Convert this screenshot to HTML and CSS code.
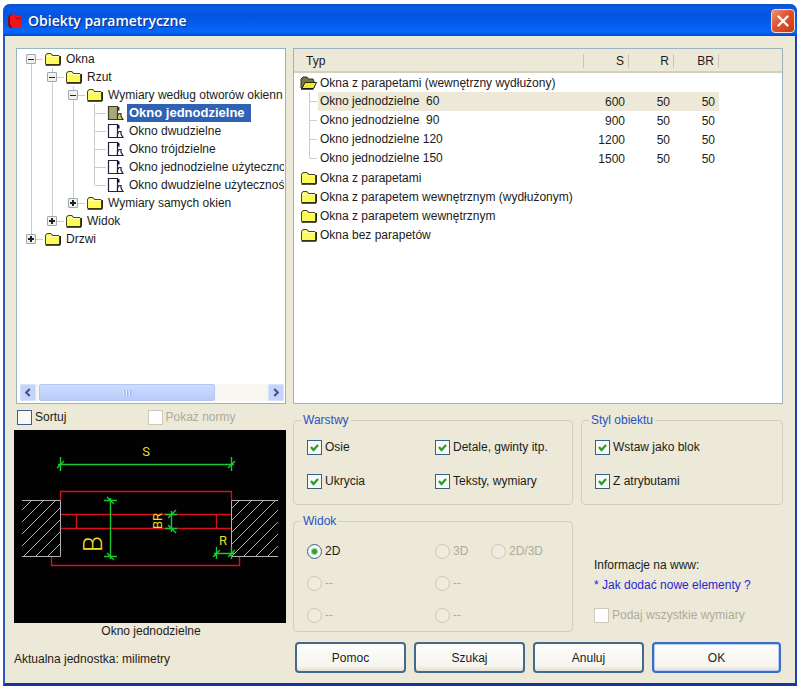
FILE: index.html
```html
<!DOCTYPE html>
<html lang="pl">
<head>
<meta charset="utf-8">
<title>Obiekty parametryczne</title>
<link rel="stylesheet" href="styles.css">
</head>
<body>
<svg class="defs" aria-hidden="true">
  <symbol id="folder" viewBox="0 0 17 14">
    <path d="M1.500 11.500V3.500L3 1.500h4l1.500 2H15l.5 1v7l-1 1H2z" fill="#fdfb58" stroke="#857c20"/>
    <path d="M2.500 4.500h12" stroke="#fffcc0"/>
    <path d="M1.500 12V3.500L3 1.500h4l1.500 2H15" fill="none" stroke="#4a4520"/>
    <path d="M1.500 13h14l.7-1V4" fill="none" stroke="#1c1a08" stroke-width="1.500"/>
  </symbol>
  <symbol id="folder-open" viewBox="0 0 17 14">
    <path d="M1 12V3l2-2h4l1.500 2H13l1 2v7z" fill="#77744c" stroke="#2d2b20"/>
    <path d="M2 12.500L5 6.500h11.500l-3 6z" fill="#f0ec35" stroke="#2b2908"/>
    <path d="M1 13h12.500" stroke="#111" stroke-width="1.400"/>
  </symbol>
  <symbol id="window-item" viewBox="0 0 17 16">
    <path d="M1.500 1.500h9v13h-9z" fill="#fff" stroke="#222238" stroke-width="1.200"/>
    <path d="M10.500 1.500l2 1v3h-2z" fill="#0b0b40"/>
    <path d="M10.500 14.500V11l1.500-2.500h2V11l2 3.500z" fill="#fff" stroke="#222238" stroke-width="1.200"/>
  </symbol>
  <symbol id="window-item-selected" viewBox="0 0 17 16">
    <path d="M1.500 1.500h9v13h-9z" fill="#aaa77a" stroke="#3a3922" stroke-width="1.200"/>
    <path d="M10.500 1.500l2 1v3h-2z" fill="#3a3922"/>
    <path d="M10.500 14.500V11l1.500-2.500h2V11l2 3.500z" fill="#d8cc50" stroke="#3a3922" stroke-width="1.200"/>
  </symbol>
</svg>

<main class="window">
  <header class="titlebar">
    <svg class="logo" viewBox="0 0 16 16" aria-hidden="true">
      <path d="M1 4l4-3 3 3v10l-5 1-2-3z" fill="#8c0613"/>
      <path d="M3 3l4-2 3 2 3-1 2 3-1 4 1 5-9 1-3-4z" fill="#f0141c"/>
      <path d="M8 4l3 2 3-1" fill="none" stroke="#8c0613"/>
    </svg>
    <h1>Obiekty parametryczne</h1>
    <button class="close" type="button" aria-label="Zamknij">
      <svg viewBox="0 0 20 20" aria-hidden="true"><path d="M5.500 5.500l9 9M14.500 5.500l-9 9" stroke="#fff" stroke-width="2.400" stroke-linecap="round"/></svg>
    </button>
  </header>

  <form class="content">
    <section class="left">
      <div class="panel tree-panel">
        <ul class="tree">
          <li>
            <div class="node"><button type="button" class="expander" aria-label="Zwiń"></button><svg class="icon"><use href="#folder"/></svg><span>Okna</span></div>
            <ul>
              <li>
                <div class="node"><button type="button" class="expander" aria-label="Zwiń"></button><svg class="icon"><use href="#folder"/></svg><span>Rzut</span></div>
                <ul>
                  <li>
                    <div class="node"><button type="button" class="expander" aria-label="Zwiń"></button><svg class="icon"><use href="#folder"/></svg><span>Wymiary według otworów okienn</span></div>
                    <ul>
                      <li><div class="node leaf"><svg class="icon"><use href="#window-item-selected"/></svg><span class="selected">Okno jednodzielne</span></div></li>
                      <li><div class="node leaf"><svg class="icon"><use href="#window-item"/></svg><span>Okno dwudzielne</span></div></li>
                      <li><div class="node leaf"><svg class="icon"><use href="#window-item"/></svg><span>Okno trójdzielne</span></div></li>
                      <li><div class="node leaf"><svg class="icon"><use href="#window-item"/></svg><span>Okno jednodzielne użyteczno</span></div></li>
                      <li><div class="node leaf"><svg class="icon"><use href="#window-item"/></svg><span>Okno dwudzielne użytecznoś</span></div></li>
                    </ul>
                  </li>
                  <li><div class="node"><button type="button" class="expander closed" aria-label="Rozwiń"></button><svg class="icon"><use href="#folder"/></svg><span>Wymiary samych okien</span></div></li>
                </ul>
              </li>
              <li><div class="node"><button type="button" class="expander closed" aria-label="Rozwiń"></button><svg class="icon"><use href="#folder"/></svg><span>Widok</span></div></li>
            </ul>
          </li>
          <li><div class="node"><button type="button" class="expander closed" aria-label="Rozwiń"></button><svg class="icon"><use href="#folder"/></svg><span>Drzwi</span></div></li>
        </ul>
        <div class="scrollbar">
          <button type="button" aria-label="W lewo"><svg viewBox="0 0 16 16"><path d="M10 4L6 8l4 4" fill="none" stroke="#3d5185" stroke-width="2.400"/></svg></button>
          <div class="track"><div class="thumb"><i></i></div></div>
          <button type="button" aria-label="W prawo"><svg viewBox="0 0 16 16"><path d="M6 4l4 4-4 4" fill="none" stroke="#3d5185" stroke-width="2.400"/></svg></button>
        </div>
      </div>

      <div class="options">
        <label><input type="checkbox"> Sortuj</label>
        <label class="disabled"><input type="checkbox" disabled> Pokaż normy</label>
      </div>

      <figure class="preview">
        <svg viewBox="0 0 272 193" role="img" aria-label="Okno jednodzielne">
          <defs>
            <clipPath id="wall-left"><path d="M8 70h38v56H8z"/></clipPath>
            <clipPath id="wall-right"><path d="M217 70h47v56h-47z"/></clipPath>
          </defs>
          <g fill="none" stroke="#b4b0b8">
            <path clip-path="url(#wall-left)" d="M-4 92l30-30M-4 104l42-42M-4 116l54-54M-4 128l66-66M6 130l54-54M18 130l42-42M30 130l30-30M42 130l12-12"/>
            <path clip-path="url(#wall-right)" d="M204 92l30-30M204 104l42-42M204 116l54-54M204 128l66-66M214 130l54-54M226 130l42-42M238 130l30-30M250 130l18-18"/>
            <path d="M8 70.500h38.500v56H8M264 70.500h-46.500v56H264"/>
          </g>
          <g fill="none" stroke="#d8101c" stroke-width="1.400">
            <path d="M46.500 70V61.500h171V70M47 84.500h170M47 98.500h170M62.500 84.500v14M202.500 84.500v14M37.500 127v8.500h188V127"/>
          </g>
          <g fill="none" stroke="#19c832" stroke-width="1.400">
            <path d="M44 34.500h176M46.500 27v14M43 38l7-7M217.500 27v14M214 38l7-7"/>
            <path d="M96.500 68v61M90 70.500h13M93 67l7 7M90 126.500h13M93 123l7 7"/>
            <path d="M157.500 81v21M151 84.500h12M154 88l8-8M151 98.500h12M154 95l8 8"/>
            <path d="M200 123.500h20M202.500 117v12M199 127l7-7M217.500 117v12M214 127l7-7"/>
          </g>
          <g class="cad-text">
            <text x="132" y="26">S</text>
            <text x="209" y="115">R</text>
            <text transform="translate(148 91) rotate(-90)">BR</text>
            <text class="large" transform="translate(88 114) rotate(-90)">B</text>
          </g>
        </svg>
        <figcaption>Okno jednodzielne</figcaption>
      </figure>
    </section>

    <section class="right">
      <div class="panel list-panel">
        <table>
          <colgroup><col><col class="num-col"><col class="num-col"><col class="num-col"><col class="rest-col"></colgroup>
          <thead><tr><th>Typ</th><th>S</th><th>R</th><th>BR</th><th></th></tr></thead>
          <tbody>
            <tr><td colspan="5"><div class="group"><svg class="icon"><use href="#folder-open"/></svg>Okna z parapetami (wewnętrzny wydłużony)</div></td></tr>
            <tr class="current"><td><div class="child"><span>Okno jednodzielne&nbsp; 60</span></div></td><td>600</td><td>50</td><td>50</td></tr>
            <tr><td><div class="child"><span>Okno jednodzielne&nbsp; 90</span></div></td><td>900</td><td>50</td><td>50</td></tr>
            <tr><td><div class="child"><span>Okno jednodzielne 120</span></div></td><td>1200</td><td>50</td><td>50</td></tr>
            <tr><td><div class="child last"><span>Okno jednodzielne 150</span></div></td><td>1500</td><td>50</td><td>50</td></tr>
            <tr><td colspan="5"><div class="group"><svg class="icon"><use href="#folder"/></svg>Okna z parapetami</div></td></tr>
            <tr><td colspan="5"><div class="group"><svg class="icon"><use href="#folder"/></svg>Okna z parapetem wewnętrznym (wydłużonym)</div></td></tr>
            <tr><td colspan="5"><div class="group"><svg class="icon"><use href="#folder"/></svg>Okna z parapetem wewnętrznym</div></td></tr>
            <tr><td colspan="5"><div class="group"><svg class="icon"><use href="#folder"/></svg>Okna bez parapetów</div></td></tr>
          </tbody>
        </table>
      </div>

      <div class="groups">
        <fieldset class="layers">
          <legend>Warstwy</legend>
          <label><input type="checkbox" checked> Osie</label>
          <label><input type="checkbox" checked> Detale, gwinty itp.</label>
          <label><input type="checkbox" checked> Ukrycia</label>
          <label><input type="checkbox" checked> Teksty, wymiary</label>
        </fieldset>
        <fieldset class="style">
          <legend>Styl obiektu</legend>
          <label><input type="checkbox" checked> Wstaw jako blok</label>
          <label><input type="checkbox" checked> Z atrybutami</label>
        </fieldset>
        <fieldset class="view">
          <legend>Widok</legend>
          <label><input type="radio" name="view" checked> 2D</label>
          <label class="disabled"><input type="radio" name="view" disabled> 3D</label>
          <label class="disabled"><input type="radio" name="view" disabled> 2D/3D</label>
          <label class="disabled"><input type="radio" name="view" disabled> --</label>
          <label class="disabled wide"><input type="radio" name="view" disabled> --</label>
          <label class="disabled"><input type="radio" name="view" disabled> --</label>
          <label class="disabled wide"><input type="radio" name="view" disabled> --</label>
        </fieldset>
        <div class="info">
          <p>Informacje na www:</p>
          <a href="#">* Jak dodać nowe elementy ?</a>
          <label class="disabled"><input type="checkbox" disabled> Podaj wszystkie wymiary</label>
        </div>
      </div>
    </section>

    <p class="unit">Aktualna jednostka: milimetry</p>
    <div class="buttons">
      <button type="button">Pomoc</button>
      <button type="button">Szukaj</button>
      <button type="button">Anuluj</button>
      <button type="button" class="default">OK</button>
    </div>
  </form>
</main>
</body>
</html>
```
FILE: styles.css
```css
* { box-sizing: border-box; }

body {
  margin: 0;
  padding: 4px 3px 2px;
  background: #fff;
  color: #1c1c1a;
  font: 12px/18px "Liberation Sans", Arial, sans-serif;
}

p, h1, ul, figure { margin: 0; padding: 0; }
button, input { font: inherit; color: inherit; margin: 0; }
.defs { position: absolute; width: 0; height: 0; }

.window {
  background: #ece9d8;
  border: 2px solid #2a5cc0;
  border-top: 0;
  border-bottom: 3px solid #16389c;
  border-right-color: #1c3fb0;
  border-radius: 7px 7px 0 0;
}

/* Title bar */
.titlebar {
  display: flex;
  align-items: center;
  gap: 5px;
  height: 32px;
  margin: 0 -2px;
  padding: 2px 2px 0 4px;
  border-radius: 7px 7px 0 0;
  background: linear-gradient(#0a50c8, #0a5ce6 12%, #0454e0 35%, #0560f2 70%, #0666ff 88%, #0348c4);
}
.titlebar h1 {
  flex: 1;
  color: #fff;
  font: 600 14px/20px "Open Sans", "Noto Sans", sans-serif;
  text-shadow: 1px 1px 1px #0a2c80;
}
.logo { width: 16px; height: 16px; }
.close {
  width: 24px;
  height: 24px;
  padding: 1px;
  border: 1px solid #f4dcd8;
  border-radius: 4px;
  background: linear-gradient(135deg, #f0937a, #e0532c 45%, #c93a10);
}
.close svg { display: block; width: 20px; height: 20px; }

/* Main layout */
.content {
  display: grid;
  grid-template-columns: minmax(0, 272fr) minmax(0, 490fr);
  column-gap: 7px;
  padding: 12px 12px 10px 9px;
}

.panel {
  height: 356px;
  border: 1px solid #9cb2bc;
  background: #fff;
  overflow: hidden;
}

.icon { flex: none; width: 17px; height: 14px; }

/* Object tree */
.tree-panel {
  display: flex;
  flex-direction: column;
  justify-content: space-between;
  margin-left: 2px;
  padding: 1px 1px 2px 3px;
}
.tree { margin-left: 6px; overflow: hidden; }
.tree ul { padding-left: 21px; }
.tree li {
  list-style: none;
  background: linear-gradient(#ccc, #ccc) 5px 0 / 1px 100% no-repeat;
}
.tree > li:first-child { background-position-y: 9px; }
.tree li:last-child { background-size: 1px 9px; }
.node {
  display: flex;
  align-items: center;
  height: 18px;
  white-space: nowrap;
  background: linear-gradient(#ccc, #ccc) 6px 9px / 11px 1px no-repeat;
}
.node .icon { margin-right: 3px; }
.node span { padding-left: 2px; }
.leaf { padding-left: 18px; }
.leaf .icon { height: 16px; }
.node .selected { padding-right: 6px; color: #fff; font-size: 13px; font-weight: 700; background: #2f62b4; }
.expander {
  flex: none;
  width: 10px;
  height: 10px;
  margin-right: 8px;
  padding: 0;
  border: 1px solid #9aa8b8;
  border-radius: 1px;
  background: linear-gradient(#222, #222) center / 6px 1px no-repeat, #f2f1ea;
}
.expander.closed {
  background: linear-gradient(#222, #222) center / 6px 2px no-repeat,
    linear-gradient(#222, #222) center / 2px 6px no-repeat, #f2f1ea;
}

.scrollbar { display: flex; height: 17px; background: #f8f6f0; }
.scrollbar button {
  width: 16px;
  padding: 0;
  border: 1px solid #d4e0fc;
  border-radius: 2px;
  background: #c4d4fb;
}
.scrollbar svg { display: block; width: 14px; height: 15px; }
.track { flex: 1; padding: 0 3px; }
.thumb {
  display: flex;
  align-items: center;
  justify-content: center;
  width: 78%;
  height: 17px;
  border: 1px solid #b4c6f4;
  border-radius: 2px;
  background: linear-gradient(#cddcff, #bacbfa);
}
.thumb i {
  width: 9px;
  height: 6px;
  background: repeating-linear-gradient(90deg, #e4ecff 0 1px, #a0b4ee 1px 2px, #bacbfa 2px 3px);
}

/* Tick boxes and radios */
label { display: flex; align-items: center; gap: 3px; white-space: nowrap; }
input {
  appearance: none;
  flex: none;
  width: 15px;
  height: 15px;
  border: 1px solid #37618a;
  background: #f8f8f4 center / 13px 13px no-repeat;
}
input[type="checkbox"]:checked {
  background-image: url("data:image/svg+xml,%3Csvg xmlns='http://www.w3.org/2000/svg' viewBox='0 0 13 13'%3E%3Cpath d='M3 6l2.500 3L10 4' fill='none' stroke='%2321a121' stroke-width='2.200'/%3E%3C/svg%3E");
}
input[type="radio"] { border-radius: 50%; }
input[type="radio"]:checked { background: radial-gradient(circle, #2ba52b 0 2px, #f8f8f4 4px); }
input:disabled { border-color: #cdcaba; background-color: #fff; }
input[type="radio"]:disabled { background-color: #efecdf; border-color: #c9c6b6; }
.disabled { color: #aeab9c; }

.options {
  display: grid;
  grid-template-columns: 131fr 139fr;
  align-items: center;
  height: 26px;
  padding-left: 3px;
}

/* Preview */
.preview svg { display: block; width: 100%; background: #020202; }
.preview figcaption { padding: 0 0 0 2px; text-align: center; line-height: 16px; }
.cad-text { fill: #e6df22; font-size: 13px; font-family: Roboto, sans-serif; text-anchor: middle; }
.cad-text .large { font-size: 26px; font-weight: 300; }

/* Type list */
table { width: 100%; table-layout: fixed; border-collapse: collapse; }
.num-col { width: 45px; }
.rest-col { width: 63px; }
th {
  height: 23px;
  padding: 2px 5px 0 0;
  text-align: right;
  font-weight: 400;
  background:
    linear-gradient(#c9c6b4, #c9c6b4) right 5px / 1px 14px no-repeat,
    #ece9d8;
  border-bottom: 2px solid #d3d0bf;
}
th:first-child { padding-left: 12px; text-align: left; }
th:last-child { background: #ece9d8; }
td { height: 19px; padding: 0 4px 0 0; text-align: right; }
td:first-child { padding: 0; text-align: left; }
.group { display: flex; align-items: center; gap: 3px; height: 19px; padding-left: 6px; }
.child {
  display: flex;
  height: 19px;
  padding-left: 24px;
  background:
    linear-gradient(#ccc, #ccc) 15px 0 / 1px 100% no-repeat,
    linear-gradient(#ccc, #ccc) 16px 9px / 7px 1px no-repeat;
}
.child.last { background-size: 1px 9px, 7px 1px; }
.child span { flex: 1; padding-left: 2px; line-height: 19px; }
.current span, .current td + td { background: #ece9d8; }

/* Option groups */
.groups {
  display: grid;
  grid-template-columns: 280fr 202fr;
  gap: 8px;
  padding-top: 8px;
}
fieldset {
  display: grid;
  min-width: 0;
  margin: 0;
  border: 1px solid #d2cfbd;
  border-radius: 4px;
}
legend { padding: 0 2px; margin-left: -6px; line-height: 16px; color: #2a50c4; }
.layers, .style { padding: 10px 13px 14px; row-gap: 16px; }
.layers { grid-template-columns: 128px 1fr; }
.view { grid-template-columns: 128px 56px 1fr; padding: 13px 13px 7px; row-gap: 14px; }
.wide { grid-column: span 2; }
.info { padding: 43px 0 0 13px; }
.info a { display: block; margin: 2px 0 12px; color: #2a1fd0; text-decoration: none; }

/* Footer */
.unit { padding-top: 11px; }
.buttons {
  display: grid;
  grid-template-columns: 111fr 111fr 111fr 129fr;
  gap: 8px;
  padding: 3px 2px 0;
}
.buttons button {
  height: 31px;
  border: 2px solid #44698c;
  border-radius: 4px;
  background: linear-gradient(#fdfdfb, #f6f5ef 80%, #e4e1d4);
}
.buttons .default { border-color: #3c6cc4; box-shadow: inset 0 0 0 1px #b8cdf4; }
```
